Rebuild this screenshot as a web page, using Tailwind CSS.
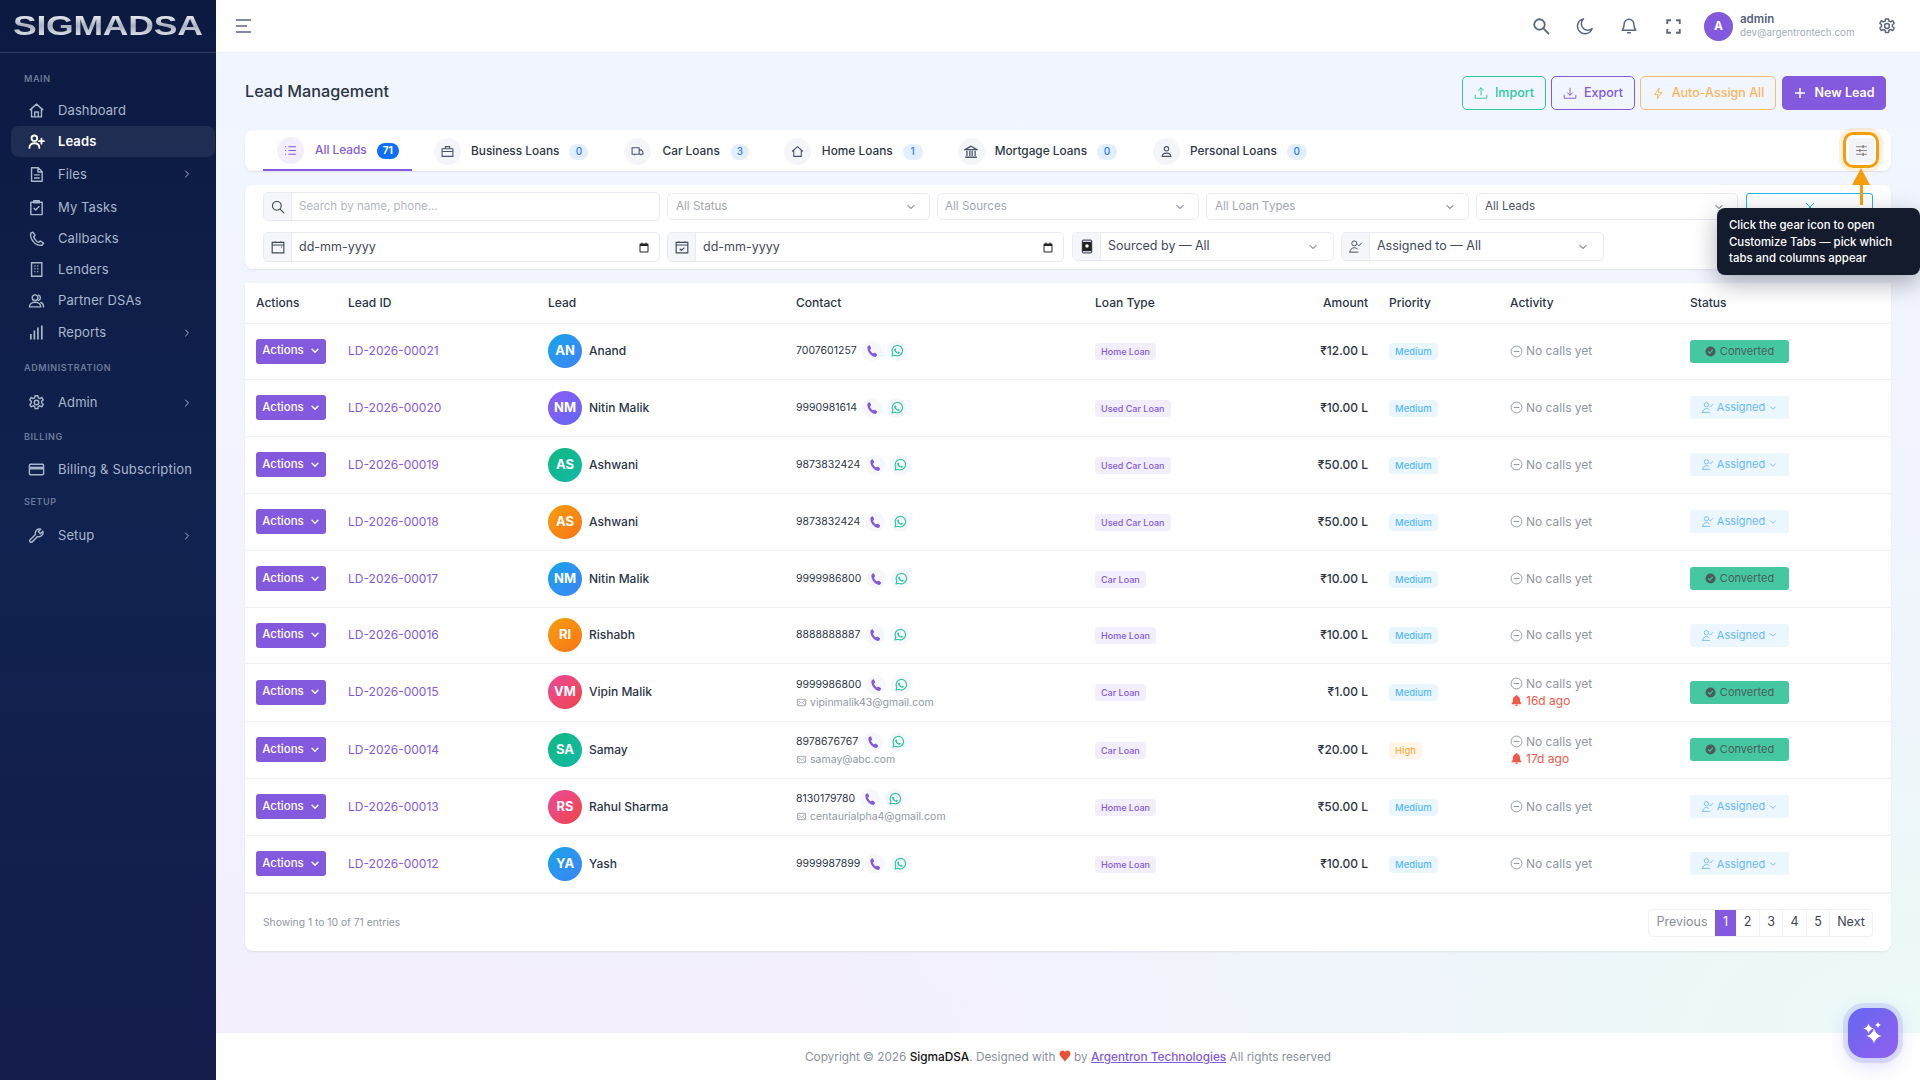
<!DOCTYPE html>
<html lang="en">
<head>
    <meta charset="UTF-8">
    <meta name="viewport" content="width=device-width, initial-scale=1.0">
    <title>Lead Management | SigmaDSA</title>
    <script src="https://cdn.jsdelivr.net/npm/@tailwindcss/browser@4"></script>
</head>
<body class="font-['Inter',sans-serif] bg-white overflow-hidden">
    <!-- Shared icons -->
    <svg class="hidden">
        <symbol id="chev" viewBox="0 0 24 24"><path d="M6 9l6 6 6-6" fill="none" stroke="currentColor" stroke-width="2" stroke-linecap="round" stroke-linejoin="round"/></symbol>
        <symbol id="chev-b" viewBox="0 0 24 24"><path d="M5 8l7 7 7-7" fill="none" stroke="currentColor" stroke-width="3.5" stroke-linecap="round" stroke-linejoin="round"/></symbol>
        <symbol id="chev-r" viewBox="0 0 24 24"><path d="M9 6l6 6-6 6" fill="none" stroke="currentColor" stroke-width="2" stroke-linecap="round" stroke-linejoin="round"/></symbol>
        <symbol id="phone" viewBox="0 0 24 24"><path fill="currentColor" d="M6.6 2.5c.8-.4 1.7-.1 2.1.7l1.6 3.2c.3.7.2 1.4-.3 1.9L8.6 9.7c.6 2.3 2.9 5.2 5 6.5l1.6-1.1c.6-.4 1.3-.4 1.9 0l2.9 2c.7.5.9 1.4.5 2.1l-1 1.7c-.5.9-1.5 1.4-2.5 1.2C9.9 21.3 4.1 13.5 4 6.1c0-1 .5-1.9 1.3-2.6z"/></symbol>
        <symbol id="wa" viewBox="0 0 24 24"><path fill="none" stroke="currentColor" stroke-width="2" stroke-linejoin="round" d="M3.5 20.5l1.3-4.6A9 9 0 1 1 8.3 19.3z"/><path fill="currentColor" d="M9 7.5c.5 0 .8.1 1 .6l.7 1.6c.1.3 0 .6-.2.9l-.6.7c.8 1.4 1.9 2.4 3.3 3.1l.8-.9c.2-.3.5-.3.8-.2l1.6.8c.4.2.5.5.4.9-.2 1.2-1.3 1.9-2.5 1.8-3.5-.4-6.6-3.4-7.2-6.8-.1-1.2.7-2.5 1.9-2.5z"/></symbol>
        <symbol id="mail" viewBox="0 0 24 24"><rect x="3" y="5" width="18" height="14" rx="2" fill="none" stroke="currentColor" stroke-width="1.8"/><path d="M3.5 7l8.5 6 8.5-6M3.5 18l6-6M20.5 18l-6-6" fill="none" stroke="currentColor" stroke-width="1.5"/></symbol>
        <symbol id="minus" viewBox="0 0 24 24"><circle cx="12" cy="12" r="10" fill="none" stroke="currentColor" stroke-width="1.8"/><path d="M7.5 12h9" stroke="currentColor" stroke-width="1.8" stroke-linecap="round"/></symbol>
        <symbol id="bell" viewBox="0 0 24 24"><path fill="currentColor" d="M12 2a2 2 0 0 1 2 1.7 6.5 6.5 0 0 1 4.5 6.3c0 4 .8 5.5 2.5 7.5v1.5H3v-1.5C4.7 15.5 5.5 14 5.5 10A6.5 6.5 0 0 1 10 3.7 2 2 0 0 1 12 2zM9.5 20h5a2.5 2.5 0 0 1-5 0z"/></symbol>
        <symbol id="check" viewBox="0 0 24 24"><circle cx="12" cy="12" r="11" fill="currentColor"/><path d="M7.5 12.5l3 3 6-6.5" fill="none" stroke="#45c8a1" stroke-width="2.2" stroke-linecap="round" stroke-linejoin="round"/></symbol>
        <symbol id="usercheck" viewBox="0 0 24 24"><circle cx="10" cy="7" r="4" fill="none" stroke="currentColor" stroke-width="1.6"/><path d="M3 21c0-4 3-7 7-7 2 0 3.5.6 4.8 1.8M3 21h13M15.5 9l2 2 4-4.5" fill="none" stroke="currentColor" stroke-width="1.6" stroke-linecap="round" stroke-linejoin="round"/></symbol>
        <symbol id="cal" viewBox="0 0 24 24"><path fill="currentColor" d="M7 2h2v2h6V2h2v2h2a2 2 0 0 1 2 2v14a2 2 0 0 1-2 2H5a2 2 0 0 1-2-2V6a2 2 0 0 1 2-2h2zM5 9v11h14V9z"/></symbol>
    </svg>

    <div class="flex h-[1080px] w-[1920px]">
        <!-- Sidebar -->
        <aside class="w-[216px] shrink-0 h-full bg-linear-to-b from-[#0c1a42] via-[#10224f] to-[#141c4c] text-[#aab6cc]">
            <div class="h-[53px] border-b border-white/15 flex items-center pl-[13px] overflow-hidden">
                <span class="font-['Liberation_Sans',sans-serif] font-bold text-[28px] leading-none origin-left scale-x-[1.27] tracking-[-0.2px] bg-linear-to-b from-white via-[#aab2be] to-[#f4f5f8] bg-clip-text text-transparent">SIGMADSA</span>
            </div>
            <nav class="pl-[11px] pr-px text-[13px] leading-none tracking-[0.1px]">
                <p class="mt-[21px] pl-[13px] text-[9px] font-semibold tracking-[0.6px] text-[#6c7a99]">MAIN</p>
                <a class="mt-[12px] h-[31px] flex items-center pl-[17px] pr-[22px] gap-[13px]">
                    <svg class="w-[17px] h-[17px]" viewBox="0 0 24 24" fill="none" stroke="currentColor" stroke-width="2" stroke-linejoin="round"><path d="M2.5 11.5L12 3l9.5 8.5M5 9.5V21h14V9.500M9.5 21v-7h5v7"/></svg>
                    <span>Dashboard</span>
                </a>
                <a class="h-[31px] flex items-center pl-[17px] pr-[22px] gap-[13px] rounded-lg bg-white/8 text-white font-semibold">
                    <svg class="w-[17px] h-[17px]" viewBox="0 0 24 24" fill="none" stroke="currentColor" stroke-width="2.6" stroke-linecap="round"><circle cx="9" cy="7.5" r="4"/><path d="M2 21c0-4 3-6.5 7-6.5s7 2.5 7 6.5M19 8v7M15.5 11.5h7"/></svg>
                    <span>Leads</span>
                </a>
                <a class="mt-px h-[32px] flex items-center pl-[17px] pr-[22px] gap-[13px]">
                    <svg class="w-[17px] h-[17px]" viewBox="0 0 24 24" fill="none" stroke="currentColor" stroke-width="2" stroke-linejoin="round"><path d="M5 2.5h9.5L20 8v13.5H5zM14 3v5.5h6M8.5 12.5h8M8.5 17h8"/></svg>
                    <span>Files</span>
                    <svg class="w-[12px] h-[12px] ml-auto"><use href="#chev-r"/></svg>
                </a>
                <a class="mt-px h-[32px] flex items-center pl-[17px] pr-[22px] gap-[13px]">
                    <svg class="w-[17px] h-[17px]" viewBox="0 0 24 24" fill="none" stroke="currentColor" stroke-width="2" stroke-linejoin="round" stroke-linecap="round"><path d="M4 4.5h16V22H4zM8 2.5h8v3H8zM8.5 13l2.5 2.5 4.5-5"/></svg>
                    <span>My Tasks</span>
                </a>
                <a class="h-[31px] flex items-center pl-[17px] pr-[22px] gap-[13px]">
                    <svg class="w-[17px] h-[17px]" viewBox="0 0 24 24" fill="none" stroke="currentColor" stroke-width="2" stroke-linejoin="round"><path d="M7 3L4 4.5C3 8 4 12 7.5 16.5S16 22 20 21.5l2-3-5-3-2 2c-2-.5-6-4.5-7-8l2-2z"/></svg>
                    <span>Callbacks</span>
                </a>
                <a class="h-[31px] flex items-center pl-[17px] pr-[22px] gap-[13px]">
                    <svg class="w-[17px] h-[17px]" viewBox="0 0 24 24" fill="none" stroke="currentColor" stroke-width="2"><path d="M5 2.5h14.5v19H5zM9 7h1.5M13 7h1.5M9 11h1.5M13 11h1.5M9 15h1.5M13 15h1.5"/></svg>
                    <span>Lenders</span>
                </a>
                <a class="h-[31px] flex items-center pl-[17px] pr-[22px] gap-[13px]">
                    <svg class="w-[17px] h-[17px]" viewBox="0 0 24 24" fill="none" stroke="currentColor" stroke-width="2" stroke-linecap="round"><circle cx="10" cy="8" r="4"/><path d="M2 21c0-4 3.5-6.5 8-6.5s8 2.5 8 6.5zM15 4.3a4 4 0 0 1 0 7.4M18 14.8c2.500.8 4 3 4 6.200"/></svg>
                    <span>Partner DSAs</span>
                </a>
                <a class="mt-px h-[31px] flex items-center pl-[17px] pr-[22px] gap-[13px]">
                    <svg class="w-[17px] h-[17px]" viewBox="0 0 24 24" fill="none" stroke="currentColor" stroke-width="2.4"><path d="M4 22v-8M9 22V9M14 22V5M19.5 22V2"/></svg>
                    <span>Reports</span>
                    <svg class="w-[12px] h-[12px] ml-auto"><use href="#chev-r"/></svg>
                </a>
                <p class="mt-[15px] pl-[13px] text-[9px] font-semibold tracking-[0.6px] text-[#6c7a99]">ADMINISTRATION</p>
                <a class="mt-[15px] h-[31px] flex items-center pl-[17px] pr-[22px] gap-[13px]">
                    <svg class="w-[17px] h-[17px]" viewBox="0 0 24 24" fill="none" stroke="currentColor" stroke-width="2" stroke-linejoin="round"><path d="M10 2.5h4l.6 3 2.3 1 2.6-1.6 2 3.4-2.3 2 .1 2.4 2.2 2-2 3.4-2.6-1.5-2.3 1-.6 3h-4l-.6-3-2.3-1-2.6 1.5-2-3.4 2.2-2 0-2.4-2.2-2 2-3.4 2.6 1.6 2.3-1z"/><circle cx="12" cy="12" r="3.2"/></svg>
                    <span>Admin</span>
                    <svg class="w-[12px] h-[12px] ml-auto"><use href="#chev-r"/></svg>
                </a>
                <p class="mt-[14px] pl-[13px] text-[9px] font-semibold tracking-[0.6px] text-[#6c7a99]">BILLING</p>
                <a class="mt-[13px] h-[31px] flex items-center pl-[17px] pr-[12px] gap-[13px]">
                    <svg class="w-[17px] h-[17px]" viewBox="0 0 24 24" fill="none" stroke="currentColor" stroke-width="2"><rect x="2" y="4.5" width="20" height="15" rx="1.5"/><path d="M2 10h20" stroke-width="4"/></svg>
                    <span class="whitespace-nowrap tracking-[0.2px]">Billing &amp; Subscription</span>
                </a>
                <p class="mt-[12px] pl-[13px] text-[9px] font-semibold tracking-[0.6px] text-[#6c7a99]">SETUP</p>
                <a class="mt-[14px] h-[31px] flex items-center pl-[17px] pr-[22px] gap-[13px]">
                    <svg class="w-[17px] h-[17px]" viewBox="0 0 24 24" fill="none" stroke="currentColor" stroke-width="2" stroke-linejoin="round"><path d="M21 6l-3.5 3.5-3-3L18 3a6 6 0 0 0-7.5 7.5L3 18c-1 1-1 2 0 3s2 1 3 0l7.5-7.5A6 6 0 0 0 21 6z"/></svg>
                    <span>Setup</span>
                    <svg class="w-[12px] h-[12px] ml-auto"><use href="#chev-r"/></svg>
                </a>
            </nav>
        </aside>

        <div class="flex-1 flex flex-col min-w-0">
            <!-- Header -->
            <header class="h-[53px] shrink-0 bg-white border-b border-[#eef0f5] flex items-center pl-[20px] pr-[24px] text-[#5a6680]">
                <svg class="w-[16px] h-[14px]" viewBox="0 0 16 14" fill="none" stroke="currentColor" stroke-width="1.5"><path d="M0 1h15M0 7h11M0 13h15"/></svg>
                <div class="ml-auto flex items-center">
                    <svg class="w-[18px] h-[18px]" viewBox="0 0 24 24" fill="none" stroke="currentColor" stroke-width="2.4" stroke-linecap="round"><circle cx="10" cy="10" r="7"/><path d="M15.5 15.5L22 22"/></svg>
                    <svg class="w-[18px] h-[18px] ml-[26px]" viewBox="0 0 24 24" fill="none" stroke="currentColor" stroke-width="2" stroke-linejoin="round"><path d="M10 2.5a10 10 0 1 0 11.5 13 8.5 8.5 0 0 1-11.5-13z"/></svg>
                    <svg class="w-[18px] h-[18px] ml-[26px]" viewBox="0 0 24 24" fill="none" stroke="currentColor" stroke-width="2" stroke-linejoin="round"><path d="M12 3a6.5 6.5 0 0 0-6.5 6.5c0 4.5-1 6-2.500 8h18c-1.500-2-2.500-3.500-2.500-8A6.500 6.500 0 0 0 12 3zM9.500 21h5"/></svg>
                    <svg class="w-[15px] h-[15px] ml-[28px]" viewBox="0 0 24 24" fill="none" stroke="currentColor" stroke-width="3"><path d="M2 8V2h6M16 2h6v6M22 16v6h-6M8 22H2v-6"/></svg>
                    <span class="ml-[23px] w-[29px] h-[29px] rounded-full bg-[#8359dd] text-white text-[12px] font-bold flex items-center justify-center">A</span>
                    <div class="ml-[7px] w-[126px]">
                        <p class="text-[11.5px] leading-[14px] font-semibold text-[#55617b]">admin</p>
                        <p class="text-[9.8px] leading-[14px] text-[#a4acba]">dev@argentrontech.com</p>
                    </div>
                    <svg class="w-[18px] h-[18px] ml-[12px]" viewBox="0 0 24 24" fill="none" stroke="currentColor" stroke-width="2" stroke-linejoin="round"><path d="M10 2.5h4l.6 3 2.3 1 2.6-1.6 2 3.4-2.3 2 .1 2.4 2.2 2-2 3.4-2.6-1.5-2.3 1-.6 3h-4l-.6-3-2.3-1-2.6 1.5-2-3.4 2.2-2 0-2.4-2.2-2 2-3.4 2.6 1.6 2.3-1z"/><circle cx="12" cy="12" r="3.2"/></svg>
                </div>
            </header>

            <!-- Main Content -->
            <main class="relative flex-1 bg-[radial-gradient(ellipse_at_bottom_right,#ebfaf7_0%,transparent_45%),linear-gradient(180deg,#f1f6fe_0%,#f3f3fe_50%,#f3effd_100%)] pl-[29px] pr-[29px]">
                <div class="h-[77px] flex items-start">
                    <h1 class="mt-[27px] text-[16.2px] leading-[22px] font-medium text-[#2a3547]">Lead Management</h1>
                    <div class="ml-auto mt-[23px] mr-[5px] flex text-[12.5px] font-medium">
                        <button class="h-[34px] w-[84px] rounded-[5px] border border-[#2fc6a0] text-[#2fc6a0] flex items-center justify-center gap-[7px]">
                            <svg class="w-[14px] h-[14px]" viewBox="0 0 24 24" fill="none" stroke="currentColor" stroke-width="1.6"><path d="M12 16V3M7 8l5-5 5 5M2 15v6h20v-6"/></svg>Import
                        </button>
                        <button class="ml-[5px] h-[34px] w-[84px] rounded-[5px] border border-[#8359dd] text-[#8359dd] flex items-center justify-center gap-[7px]">
                            <svg class="w-[14px] h-[14px]" viewBox="0 0 24 24" fill="none" stroke="currentColor" stroke-width="1.6"><path d="M12 3v13M7 11l5 5 5-5M2 15v6h20v-6"/></svg>Export
                        </button>
                        <button class="ml-[5px] h-[34px] w-[136px] rounded-[5px] border border-[#f8bd6e] text-[#f8b65f] flex items-center justify-center gap-[7px]">
                            <svg class="w-[13px] h-[15px]" viewBox="0 0 24 24" fill="none" stroke="currentColor" stroke-width="1.8" stroke-linejoin="round"><path d="M13 2L5 14h6l-1 8 8-12h-6z"/></svg>Auto-Assign All
                        </button>
                        <button class="ml-[6px] h-[34px] w-[104px] rounded-[5px] bg-[#8359dd] text-white font-semibold flex items-center justify-center gap-[9px]">
                            <svg class="w-[12px] h-[12px]" viewBox="0 0 12 12" fill="none" stroke="currentColor" stroke-width="1.5"><path d="M6 1v10M1 6h10"/></svg>New Lead
                        </button>
                    </div>
                </div>

                <!-- Loan tabs -->
                <div class="h-[41px] bg-white rounded-lg shadow-[0_1px_2px_rgba(60,70,110,.1)] relative flex items-center pl-[18px] pt-[2px] text-[11.85px] font-medium text-[#2d3748]">
                    <div class="relative h-full w-[149px] flex items-center pl-[14px] text-[#8359dd] border-b-[2px] border-[#8359dd]">
                        <span class="w-[27px] h-[27px] rounded-full bg-[#f3eefc] flex items-center justify-center">
                            <svg class="w-[13px] h-[13px]" viewBox="0 0 24 24" fill="none" stroke="currentColor" stroke-width="2"><path d="M8 5h14M8 12h14M8 19h14M2 5h2M2 12h2M2 19h2"/></svg>
                        </span>
                        <span class="ml-[11px]">All Leads</span>
                        <span class="ml-[10px] w-[22px] h-[16px] rounded-full bg-[#0d6efd] text-white text-[10px] font-bold flex items-center justify-center">71</span>
                    </div>
                    <div class="ml-[22px] flex items-center">
                        <span class="w-[27px] h-[27px] rounded-full bg-[#f3f5f8] flex items-center justify-center">
                            <svg class="w-[13px] h-[13px]" viewBox="0 0 24 24" fill="none" stroke="#4a5568" stroke-width="2"><path d="M2 7h20v14H2zM8 7V3h8v4M2 12h20"/></svg>
                        </span>
                        <span class="ml-[10px]">Business Loans</span>
                        <span class="ml-[10px] w-[19px] h-[16px] rounded-full bg-[#e3eefe] text-[#2b7fff] text-[10px] flex items-center justify-center">0</span>
                    </div>
                    <div class="ml-[36px] flex items-center">
                        <span class="w-[27px] h-[27px] rounded-full bg-[#f3f5f8] flex items-center justify-center">
                            <svg class="w-[13px] h-[13px]" viewBox="0 0 24 24" fill="none" stroke="#4a5568" stroke-width="2"><path d="M2 5h13v12H2zM15 9h4l3 4v4h-7M6 17v2M18 17v2"/></svg>
                        </span>
                        <span class="ml-[11px]">Car Loans</span>
                        <span class="ml-[11px] w-[18px] h-[16px] rounded-full bg-[#e3eefe] text-[#2b7fff] text-[10px] flex items-center justify-center">3</span>
                    </div>
                    <div class="ml-[35px] flex items-center">
                        <span class="w-[27px] h-[27px] rounded-full bg-[#f3f5f8] flex items-center justify-center">
                            <svg class="w-[13px] h-[13px]" viewBox="0 0 24 24" fill="none" stroke="#4a5568" stroke-width="2" stroke-linejoin="round"><path d="M2 12L12 3l10 9M5 10v11h14V10"/></svg>
                        </span>
                        <span class="ml-[11px]">Home Loans</span>
                        <span class="ml-[10px] w-[20px] h-[16px] rounded-full bg-[#e3eefe] text-[#2b7fff] text-[10px] flex items-center justify-center">1</span>
                    </div>
                    <div class="ml-[35px] flex items-center">
                        <span class="w-[27px] h-[27px] rounded-full bg-[#f3f5f8] flex items-center justify-center">
                            <svg class="w-[14px] h-[14px]" viewBox="0 0 24 24" fill="none" stroke="#4a5568" stroke-width="2.2"><path d="M12 2L2 8h20zM5 10v9M10 10v9M14 10v9M19 10v9M2 21h20"/></svg>
                        </span>
                        <span class="ml-[10px]">Mortgage Loans</span>
                        <span class="ml-[10px] w-[20px] h-[16px] rounded-full bg-[#e3eefe] text-[#2b7fff] text-[10px] flex items-center justify-center">0</span>
                    </div>
                    <div class="ml-[36px] flex items-center">
                        <span class="w-[27px] h-[27px] rounded-full bg-[#f3f5f8] flex items-center justify-center">
                            <svg class="w-[13px] h-[13px]" viewBox="0 0 24 24" fill="none" stroke="#4a5568" stroke-width="2"><circle cx="12" cy="7" r="4"/><path d="M4 21c0-4 3.5-6 8-6s8 2 8 6z"/></svg>
                        </span>
                        <span class="ml-[10px]">Personal Loans</span>
                        <span class="ml-[10px] w-[20px] h-[16px] rounded-full bg-[#e3eefe] text-[#2b7fff] text-[10px] flex items-center justify-center">0</span>
                    </div>
                </div>

                <!-- Filters -->
                <div class="mt-[14px] h-[84px] bg-white rounded-lg shadow-[0_1px_2px_rgba(60,70,110,.1)] pl-[18px] text-[11.6px] text-[#a1a7b3]">
                    <div class="pt-[7px] flex gap-[7px] items-center">
                        <div class="w-[397px] h-[29px] flex rounded-[5px] border border-[#e8ebf2] overflow-hidden">
                            <span class="w-[28px] bg-[#f4f6f9] border-r border-[#e8ebf2] flex items-center justify-center text-[#3f4a5a]">
                                <svg class="w-[14px] h-[14px]" viewBox="0 0 24 24" fill="none" stroke="currentColor" stroke-width="2" stroke-linecap="round"><circle cx="10" cy="10" r="7.5"/><path d="M16 16l6 6"/></svg>
                            </span>
                            <span class="pl-[7px] pt-px flex items-center text-[11.5px] text-[#b3b8c2]">Search by name, phone...</span>
                        </div>
                        <div class="w-[263px] h-[27px] rounded-[5px] border border-[#e8ebf2] flex items-center pl-[8px] pr-[12px]">All Status<svg class="ml-auto w-[12px] h-[12px] text-[#4a5568]"><use href="#chev"/></svg></div>
                        <div class="w-[262px] h-[27px] rounded-[5px] border border-[#e8ebf2] flex items-center pl-[7px] pr-[12px]">All Sources<svg class="ml-auto w-[12px] h-[12px] text-[#4a5568]"><use href="#chev"/></svg></div>
                        <div class="w-[263px] h-[27px] rounded-[5px] border border-[#e8ebf2] flex items-center pl-[8px] pr-[12px]">All Loan Types<svg class="ml-auto w-[12px] h-[12px] text-[#4a5568]"><use href="#chev"/></svg></div>
                        <div class="w-[262px] h-[27px] rounded-[5px] border border-[#e8ebf2] flex items-center pl-[8px] pr-[12px] text-[#4a5566]">All Leads<svg class="ml-auto w-[12px] h-[12px]"><use href="#chev"/></svg></div>
                        <button class="ml-px w-[127px] h-[27px] rounded-[3px] border border-[#25b7e4] flex items-center justify-center text-[#25b7e4]">
                            <svg class="w-[10px] h-[10px]" viewBox="0 0 10 10" fill="none" stroke="currentColor" stroke-width="1"><path d="M1 1l8 8M9 1l-8 8"/></svg>
                        </button>
                    </div>
                    <div class="mt-[11px] flex gap-[7px] text-[12.5px] text-[#3f4a5a]">
                        <div class="w-[397px] h-[30px] flex rounded-[5px] border border-[#e8ebf2] overflow-hidden">
                            <span class="w-[28px] bg-[#f4f6f9] border-r border-[#e8ebf2] flex items-center justify-center">
                                <svg class="w-[14px] h-[14px]" viewBox="0 0 24 24" fill="none" stroke="currentColor" stroke-width="2"><path d="M2 4h20v18H2zM2 8.5h20M7 2v3M17 2v3M17 12h2"/></svg>
                            </span>
                            <span class="pl-[7px] flex-1 flex items-center">dd-mm-yyyy</span>
                            <svg class="w-[12px] h-[13px] self-center mr-[9px] text-[#222]"><use href="#cal"/></svg>
                        </div>
                        <div class="w-[397px] h-[30px] flex rounded-[5px] border border-[#e8ebf2] overflow-hidden">
                            <span class="w-[28px] bg-[#f4f6f9] border-r border-[#e8ebf2] flex items-center justify-center">
                                <svg class="w-[14px] h-[14px]" viewBox="0 0 24 24" fill="none" stroke="currentColor" stroke-width="2"><path d="M2 4h20v18H2zM2 8.5h20M7 2v3M17 2v3M8 15l3 3 5-5"/></svg>
                            </span>
                            <span class="pl-[7px] flex-1 flex items-center">dd-mm-yyyy</span>
                            <svg class="w-[12px] h-[13px] self-center mr-[9px] text-[#222]"><use href="#cal"/></svg>
                        </div>
                        <div class="ml-px w-[262px] h-[29px] flex rounded-[5px] border border-[#e8ebf2] overflow-hidden">
                            <span class="w-[28px] bg-[#f4f6f9] border-r border-[#e8ebf2] flex items-center justify-center">
                                <svg class="w-[14px] h-[15px]" viewBox="0 0 24 24"><rect x="4" y="1" width="16" height="22" rx="2" fill="none" stroke="#4a5568" stroke-width="2"/><rect x="4" y="4" width="16" height="16" fill="#222"/><circle cx="12" cy="11" r="3" fill="#fff"/></svg>
                            </span>
                            <span class="pl-[7px] flex-1 flex items-center">Sourced by — All</span>
                            <svg class="w-[12px] h-[12px] self-center mr-[14px] text-[#4a5568]"><use href="#chev"/></svg>
                        </div>
                        <div class="w-[263px] h-[29px] flex rounded-[5px] border border-[#e8ebf2] overflow-hidden">
                            <span class="w-[28px] bg-[#f4f6f9] border-r border-[#e8ebf2] flex items-center justify-center text-[#4a5568]">
                                <svg class="w-[15px] h-[15px]"><use href="#usercheck"/></svg>
                            </span>
                            <span class="pl-[7px] flex-1 flex items-center">Assigned to — All</span>
                            <svg class="w-[12px] h-[12px] self-center mr-[14px]"><use href="#chev"/></svg>
                        </div>
                    </div>
                </div>

                <!-- Leads table -->
                <div class="mt-[14px] bg-white rounded-b-lg shadow-[0_1px_2px_rgba(60,70,110,.1)]">
                    <table class="w-full table-fixed border-collapse">
                        <colgroup>
                            <col class="w-[92px]"><col class="w-[200px]"><col class="w-[248px]"><col class="w-[299px]"><col class="w-[200px]"><col class="w-[94px]"><col class="w-[121px]"><col class="w-[180px]"><col>
                        </colgroup>
                        <thead>
                            <tr class="h-[40px] border-b border-[#eff1f4] text-[12px] text-[#2a3547] text-left">
                                <th class="pl-[11px] font-medium">Actions</th>
                                <th class="pl-[11px] font-medium">Lead ID</th>
                                <th class="pl-[11px] font-medium">Lead</th>
                                <th class="pl-[11px] font-medium">Contact</th>
                                <th class="pl-[11px] font-medium">Loan Type</th>
                                <th class="pr-[10px] text-right font-medium">Amount</th>
                                <th class="pl-[11px] font-medium">Priority</th>
                                <th class="pl-[11px] font-medium">Activity</th>
                                <th class="pl-[11px] font-medium">Status</th>
                            </tr>
                        </thead>
                        <tbody class="text-[12px] text-[#2a3547]">
                            <tr class="h-[56px] border-b border-[#eff1f4]">
                                <td class="pl-[11px]"><button class="w-[70px] h-[25px] rounded-[3px] bg-[#8359dd] text-white font-medium text-[11.5px] flex items-center justify-center gap-[6px]">Actions<svg class="w-[10px] h-[10px]"><use href="#chev-b"/></svg></button></td>
                                <td class="pl-[11px] text-[#8359dd]">LD-2026-00021</td>
                                <td class="pl-[11px]"><div class="flex items-center gap-[7px]"><span class="w-[34px] h-[34px] rounded-full bg-linear-to-br from-[#0ea5e9] to-[#3b82f6] text-white text-[13px] font-bold flex items-center justify-center">AN</span><span class="font-medium">Anand</span></div></td>
                                <td class="pl-[11px]"><div class="flex items-center text-[10.5px]">7007601257<span class="ml-[5px] w-[20px] h-[20px] rounded-full bg-[#f6f7fb] flex items-center justify-center text-[#8359dd]"><svg class="w-[14px] h-[14px]"><use href="#phone"/></svg></span><span class="ml-[5px] w-[20px] h-[20px] rounded-full bg-[#f6f7fb] flex items-center justify-center text-[#2fc6a0]"><svg class="w-[14px] h-[14px]"><use href="#wa"/></svg></span></div></td>
                                <td class="pl-[11px]"><span class="inline-block px-[6px] leading-[17px] rounded-[4px] bg-[#f3eefc] text-[#8359dd] text-[9px] font-medium">Home Loan</span></td>
                                <td class="pr-[10px] text-right font-medium">₹12.00 L</td>
                                <td class="pl-[11px]"><span class="inline-block px-[6px] leading-[17px] rounded-[4px] bg-[#e9f6fe] text-[#57b9fb] text-[9.5px] font-medium">Medium</span></td>
                                <td class="pl-[11px] text-[#8f97a3]"><div class="flex items-center gap-[3px]"><svg class="w-[13px] h-[13px]"><use href="#minus"/></svg>No calls yet</div></td>
                                <td class="pl-[11px]"><span class="w-[99px] h-[23px] rounded-[3px] bg-[#45c8a1] text-[#4c5c5a] text-[11px] flex items-center justify-center gap-[4px]"><svg class="w-[11px] h-[11px]"><use href="#check"/></svg>Converted</span></td>
                            </tr>
                            <tr class="h-[57px] border-b border-[#eff1f4]">
                                <td class="pl-[11px]"><button class="w-[70px] h-[25px] rounded-[3px] bg-[#8359dd] text-white font-medium text-[11.5px] flex items-center justify-center gap-[6px]">Actions<svg class="w-[10px] h-[10px]"><use href="#chev-b"/></svg></button></td>
                                <td class="pl-[11px] text-[#8359dd]">LD-2026-00020</td>
                                <td class="pl-[11px]"><div class="flex items-center gap-[7px]"><span class="w-[34px] h-[34px] rounded-full bg-linear-to-br from-[#8b5cf6] to-[#6366f1] text-white text-[13px] font-bold flex items-center justify-center">NM</span><span class="font-medium">Nitin Malik</span></div></td>
                                <td class="pl-[11px]"><div class="flex items-center text-[10.5px]">9990981614<span class="ml-[5px] w-[20px] h-[20px] rounded-full bg-[#f6f7fb] flex items-center justify-center text-[#8359dd]"><svg class="w-[14px] h-[14px]"><use href="#phone"/></svg></span><span class="ml-[5px] w-[20px] h-[20px] rounded-full bg-[#f6f7fb] flex items-center justify-center text-[#2fc6a0]"><svg class="w-[14px] h-[14px]"><use href="#wa"/></svg></span></div></td>
                                <td class="pl-[11px]"><span class="inline-block px-[6px] leading-[17px] rounded-[4px] bg-[#f3eefc] text-[#8359dd] text-[9px] font-medium">Used Car Loan</span></td>
                                <td class="pr-[10px] text-right font-medium">₹10.00 L</td>
                                <td class="pl-[11px]"><span class="inline-block px-[6px] leading-[17px] rounded-[4px] bg-[#e9f6fe] text-[#57b9fb] text-[9.5px] font-medium">Medium</span></td>
                                <td class="pl-[11px] text-[#8f97a3]"><div class="flex items-center gap-[3px]"><svg class="w-[13px] h-[13px]"><use href="#minus"/></svg>No calls yet</div></td>
                                <td class="pl-[11px]"><span class="w-[99px] h-[23px] rounded-[3px] bg-[#ebf6fe] text-[#6ab9fb] text-[11px] flex items-center justify-center gap-[3px]"><svg class="w-[13px] h-[13px]"><use href="#usercheck"/></svg>Assigned<svg class="w-[10px] h-[10px]"><use href="#chev"/></svg></span></td>
                            </tr>
                            <tr class="h-[57px] border-b border-[#eff1f4]">
                                <td class="pl-[11px]"><button class="w-[70px] h-[25px] rounded-[3px] bg-[#8359dd] text-white font-medium text-[11.5px] flex items-center justify-center gap-[6px]">Actions<svg class="w-[10px] h-[10px]"><use href="#chev-b"/></svg></button></td>
                                <td class="pl-[11px] text-[#8359dd]">LD-2026-00019</td>
                                <td class="pl-[11px]"><div class="flex items-center gap-[7px]"><span class="w-[34px] h-[34px] rounded-full bg-linear-to-br from-[#10b981] to-[#14b8a6] text-white text-[13px] font-bold flex items-center justify-center">AS</span><span class="font-medium">Ashwani</span></div></td>
                                <td class="pl-[11px]"><div class="flex items-center text-[10.5px]">9873832424<span class="ml-[5px] w-[20px] h-[20px] rounded-full bg-[#f6f7fb] flex items-center justify-center text-[#8359dd]"><svg class="w-[14px] h-[14px]"><use href="#phone"/></svg></span><span class="ml-[5px] w-[20px] h-[20px] rounded-full bg-[#f6f7fb] flex items-center justify-center text-[#2fc6a0]"><svg class="w-[14px] h-[14px]"><use href="#wa"/></svg></span></div></td>
                                <td class="pl-[11px]"><span class="inline-block px-[6px] leading-[17px] rounded-[4px] bg-[#f3eefc] text-[#8359dd] text-[9px] font-medium">Used Car Loan</span></td>
                                <td class="pr-[10px] text-right font-medium">₹50.00 L</td>
                                <td class="pl-[11px]"><span class="inline-block px-[6px] leading-[17px] rounded-[4px] bg-[#e9f6fe] text-[#57b9fb] text-[9.5px] font-medium">Medium</span></td>
                                <td class="pl-[11px] text-[#8f97a3]"><div class="flex items-center gap-[3px]"><svg class="w-[13px] h-[13px]"><use href="#minus"/></svg>No calls yet</div></td>
                                <td class="pl-[11px]"><span class="w-[99px] h-[23px] rounded-[3px] bg-[#ebf6fe] text-[#6ab9fb] text-[11px] flex items-center justify-center gap-[3px]"><svg class="w-[13px] h-[13px]"><use href="#usercheck"/></svg>Assigned<svg class="w-[10px] h-[10px]"><use href="#chev"/></svg></span></td>
                            </tr>
                            <tr class="h-[57px] border-b border-[#eff1f4]">
                                <td class="pl-[11px]"><button class="w-[70px] h-[25px] rounded-[3px] bg-[#8359dd] text-white font-medium text-[11.5px] flex items-center justify-center gap-[6px]">Actions<svg class="w-[10px] h-[10px]"><use href="#chev-b"/></svg></button></td>
                                <td class="pl-[11px] text-[#8359dd]">LD-2026-00018</td>
                                <td class="pl-[11px]"><div class="flex items-center gap-[7px]"><span class="w-[34px] h-[34px] rounded-full bg-linear-to-br from-[#f59e0b] to-[#f97316] text-white text-[13px] font-bold flex items-center justify-center">AS</span><span class="font-medium">Ashwani</span></div></td>
                                <td class="pl-[11px]"><div class="flex items-center text-[10.5px]">9873832424<span class="ml-[5px] w-[20px] h-[20px] rounded-full bg-[#f6f7fb] flex items-center justify-center text-[#8359dd]"><svg class="w-[14px] h-[14px]"><use href="#phone"/></svg></span><span class="ml-[5px] w-[20px] h-[20px] rounded-full bg-[#f6f7fb] flex items-center justify-center text-[#2fc6a0]"><svg class="w-[14px] h-[14px]"><use href="#wa"/></svg></span></div></td>
                                <td class="pl-[11px]"><span class="inline-block px-[6px] leading-[17px] rounded-[4px] bg-[#f3eefc] text-[#8359dd] text-[9px] font-medium">Used Car Loan</span></td>
                                <td class="pr-[10px] text-right font-medium">₹50.00 L</td>
                                <td class="pl-[11px]"><span class="inline-block px-[6px] leading-[17px] rounded-[4px] bg-[#e9f6fe] text-[#57b9fb] text-[9.5px] font-medium">Medium</span></td>
                                <td class="pl-[11px] text-[#8f97a3]"><div class="flex items-center gap-[3px]"><svg class="w-[13px] h-[13px]"><use href="#minus"/></svg>No calls yet</div></td>
                                <td class="pl-[11px]"><span class="w-[99px] h-[23px] rounded-[3px] bg-[#ebf6fe] text-[#6ab9fb] text-[11px] flex items-center justify-center gap-[3px]"><svg class="w-[13px] h-[13px]"><use href="#usercheck"/></svg>Assigned<svg class="w-[10px] h-[10px]"><use href="#chev"/></svg></span></td>
                            </tr>
                            <tr class="h-[57px] border-b border-[#eff1f4]">
                                <td class="pl-[11px]"><button class="w-[70px] h-[25px] rounded-[3px] bg-[#8359dd] text-white font-medium text-[11.5px] flex items-center justify-center gap-[6px]">Actions<svg class="w-[10px] h-[10px]"><use href="#chev-b"/></svg></button></td>
                                <td class="pl-[11px] text-[#8359dd]">LD-2026-00017</td>
                                <td class="pl-[11px]"><div class="flex items-center gap-[7px]"><span class="w-[34px] h-[34px] rounded-full bg-linear-to-br from-[#0ea5e9] to-[#3b82f6] text-white text-[13px] font-bold flex items-center justify-center">NM</span><span class="font-medium">Nitin Malik</span></div></td>
                                <td class="pl-[11px]"><div class="flex items-center text-[10.5px]">9999986800<span class="ml-[5px] w-[20px] h-[20px] rounded-full bg-[#f6f7fb] flex items-center justify-center text-[#8359dd]"><svg class="w-[14px] h-[14px]"><use href="#phone"/></svg></span><span class="ml-[5px] w-[20px] h-[20px] rounded-full bg-[#f6f7fb] flex items-center justify-center text-[#2fc6a0]"><svg class="w-[14px] h-[14px]"><use href="#wa"/></svg></span></div></td>
                                <td class="pl-[11px]"><span class="inline-block px-[6px] leading-[17px] rounded-[4px] bg-[#f3eefc] text-[#8359dd] text-[9px] font-medium">Car Loan</span></td>
                                <td class="pr-[10px] text-right font-medium">₹10.00 L</td>
                                <td class="pl-[11px]"><span class="inline-block px-[6px] leading-[17px] rounded-[4px] bg-[#e9f6fe] text-[#57b9fb] text-[9.5px] font-medium">Medium</span></td>
                                <td class="pl-[11px] text-[#8f97a3]"><div class="flex items-center gap-[3px]"><svg class="w-[13px] h-[13px]"><use href="#minus"/></svg>No calls yet</div></td>
                                <td class="pl-[11px]"><span class="w-[99px] h-[23px] rounded-[3px] bg-[#45c8a1] text-[#4c5c5a] text-[11px] flex items-center justify-center gap-[4px]"><svg class="w-[11px] h-[11px]"><use href="#check"/></svg>Converted</span></td>
                            </tr>
                            <tr class="h-[56px] border-b border-[#eff1f4]">
                                <td class="pl-[11px]"><button class="w-[70px] h-[25px] rounded-[3px] bg-[#8359dd] text-white font-medium text-[11.5px] flex items-center justify-center gap-[6px]">Actions<svg class="w-[10px] h-[10px]"><use href="#chev-b"/></svg></button></td>
                                <td class="pl-[11px] text-[#8359dd]">LD-2026-00016</td>
                                <td class="pl-[11px]"><div class="flex items-center gap-[7px]"><span class="w-[34px] h-[34px] rounded-full bg-linear-to-br from-[#f59e0b] to-[#f97316] text-white text-[13px] font-bold flex items-center justify-center">RI</span><span class="font-medium">Rishabh</span></div></td>
                                <td class="pl-[11px]"><div class="flex items-center text-[10.5px]">8888888887<span class="ml-[5px] w-[20px] h-[20px] rounded-full bg-[#f6f7fb] flex items-center justify-center text-[#8359dd]"><svg class="w-[14px] h-[14px]"><use href="#phone"/></svg></span><span class="ml-[5px] w-[20px] h-[20px] rounded-full bg-[#f6f7fb] flex items-center justify-center text-[#2fc6a0]"><svg class="w-[14px] h-[14px]"><use href="#wa"/></svg></span></div></td>
                                <td class="pl-[11px]"><span class="inline-block px-[6px] leading-[17px] rounded-[4px] bg-[#f3eefc] text-[#8359dd] text-[9px] font-medium">Home Loan</span></td>
                                <td class="pr-[10px] text-right font-medium">₹10.00 L</td>
                                <td class="pl-[11px]"><span class="inline-block px-[6px] leading-[17px] rounded-[4px] bg-[#e9f6fe] text-[#57b9fb] text-[9.5px] font-medium">Medium</span></td>
                                <td class="pl-[11px] text-[#8f97a3]"><div class="flex items-center gap-[3px]"><svg class="w-[13px] h-[13px]"><use href="#minus"/></svg>No calls yet</div></td>
                                <td class="pl-[11px]"><span class="w-[99px] h-[23px] rounded-[3px] bg-[#ebf6fe] text-[#6ab9fb] text-[11px] flex items-center justify-center gap-[3px]"><svg class="w-[13px] h-[13px]"><use href="#usercheck"/></svg>Assigned<svg class="w-[10px] h-[10px]"><use href="#chev"/></svg></span></td>
                            </tr>
                            <tr class="h-[58px] border-b border-[#eff1f4]">
                                <td class="pl-[11px]"><button class="w-[70px] h-[25px] rounded-[3px] bg-[#8359dd] text-white font-medium text-[11.5px] flex items-center justify-center gap-[6px]">Actions<svg class="w-[10px] h-[10px]"><use href="#chev-b"/></svg></button></td>
                                <td class="pl-[11px] text-[#8359dd]">LD-2026-00015</td>
                                <td class="pl-[11px]"><div class="flex items-center gap-[7px]"><span class="w-[34px] h-[34px] rounded-full bg-linear-to-br from-[#ec4899] to-[#ef4444] text-white text-[13px] font-bold flex items-center justify-center">VM</span><span class="font-medium">Vipin Malik</span></div></td>
                                <td class="pl-[11px]"><div class="flex items-center text-[10.5px]">9999986800<span class="ml-[5px] w-[20px] h-[20px] rounded-full bg-[#f6f7fb] flex items-center justify-center text-[#8359dd]"><svg class="w-[14px] h-[14px]"><use href="#phone"/></svg></span><span class="ml-[5px] w-[20px] h-[20px] rounded-full bg-[#f6f7fb] flex items-center justify-center text-[#2fc6a0]"><svg class="w-[14px] h-[14px]"><use href="#wa"/></svg></span></div><div class="flex items-center gap-[3px] text-[10.5px] leading-[15px] text-[#9098a5]"><svg class="w-[11px] h-[11px]"><use href="#mail"/></svg>vipinmalik43@gmail.com</div></td>
                                <td class="pl-[11px]"><span class="inline-block px-[6px] leading-[17px] rounded-[4px] bg-[#f3eefc] text-[#8359dd] text-[9px] font-medium">Car Loan</span></td>
                                <td class="pr-[10px] text-right font-medium">₹1.00 L</td>
                                <td class="pl-[11px]"><span class="inline-block px-[6px] leading-[17px] rounded-[4px] bg-[#e9f6fe] text-[#57b9fb] text-[9.5px] font-medium">Medium</span></td>
                                <td class="pl-[11px] text-[#8f97a3]"><div class="flex items-center gap-[3px] leading-[17px]"><svg class="w-[13px] h-[13px]"><use href="#minus"/></svg>No calls yet</div><div class="flex items-center gap-[3px] leading-[17px] text-[#f0584a]"><svg class="w-[13px] h-[13px]"><use href="#bell"/></svg>16d ago</div></td>
                                <td class="pl-[11px]"><span class="w-[99px] h-[23px] rounded-[3px] bg-[#45c8a1] text-[#4c5c5a] text-[11px] flex items-center justify-center gap-[4px]"><svg class="w-[11px] h-[11px]"><use href="#check"/></svg>Converted</span></td>
                            </tr>
                            <tr class="h-[57px] border-b border-[#eff1f4]">
                                <td class="pl-[11px]"><button class="w-[70px] h-[25px] rounded-[3px] bg-[#8359dd] text-white font-medium text-[11.5px] flex items-center justify-center gap-[6px]">Actions<svg class="w-[10px] h-[10px]"><use href="#chev-b"/></svg></button></td>
                                <td class="pl-[11px] text-[#8359dd]">LD-2026-00014</td>
                                <td class="pl-[11px]"><div class="flex items-center gap-[7px]"><span class="w-[34px] h-[34px] rounded-full bg-linear-to-br from-[#10b981] to-[#14b8a6] text-white text-[13px] font-bold flex items-center justify-center">SA</span><span class="font-medium">Samay</span></div></td>
                                <td class="pl-[11px]"><div class="flex items-center text-[10.5px]">8978676767<span class="ml-[5px] w-[20px] h-[20px] rounded-full bg-[#f6f7fb] flex items-center justify-center text-[#8359dd]"><svg class="w-[14px] h-[14px]"><use href="#phone"/></svg></span><span class="ml-[5px] w-[20px] h-[20px] rounded-full bg-[#f6f7fb] flex items-center justify-center text-[#2fc6a0]"><svg class="w-[14px] h-[14px]"><use href="#wa"/></svg></span></div><div class="flex items-center gap-[3px] text-[10.5px] leading-[15px] text-[#9098a5]"><svg class="w-[11px] h-[11px]"><use href="#mail"/></svg>samay@abc.com</div></td>
                                <td class="pl-[11px]"><span class="inline-block px-[6px] leading-[17px] rounded-[4px] bg-[#f3eefc] text-[#8359dd] text-[9px] font-medium">Car Loan</span></td>
                                <td class="pr-[10px] text-right font-medium">₹20.00 L</td>
                                <td class="pl-[11px]"><span class="inline-block px-[6px] leading-[17px] rounded-[4px] bg-[#fff5e8] text-[#fbb04c] text-[9.5px] font-medium">High</span></td>
                                <td class="pl-[11px] text-[#8f97a3]"><div class="flex items-center gap-[3px] leading-[17px]"><svg class="w-[13px] h-[13px]"><use href="#minus"/></svg>No calls yet</div><div class="flex items-center gap-[3px] leading-[17px] text-[#f0584a]"><svg class="w-[13px] h-[13px]"><use href="#bell"/></svg>17d ago</div></td>
                                <td class="pl-[11px]"><span class="w-[99px] h-[23px] rounded-[3px] bg-[#45c8a1] text-[#4c5c5a] text-[11px] flex items-center justify-center gap-[4px]"><svg class="w-[11px] h-[11px]"><use href="#check"/></svg>Converted</span></td>
                            </tr>
                            <tr class="h-[57px] border-b border-[#eff1f4]">
                                <td class="pl-[11px]"><button class="w-[70px] h-[25px] rounded-[3px] bg-[#8359dd] text-white font-medium text-[11.5px] flex items-center justify-center gap-[6px]">Actions<svg class="w-[10px] h-[10px]"><use href="#chev-b"/></svg></button></td>
                                <td class="pl-[11px] text-[#8359dd]">LD-2026-00013</td>
                                <td class="pl-[11px]"><div class="flex items-center gap-[7px]"><span class="w-[34px] h-[34px] rounded-full bg-linear-to-br from-[#ec4899] to-[#ef4444] text-white text-[13px] font-bold flex items-center justify-center">RS</span><span class="font-medium">Rahul Sharma</span></div></td>
                                <td class="pl-[11px]"><div class="flex items-center text-[10.5px]">8130179780<span class="ml-[5px] w-[20px] h-[20px] rounded-full bg-[#f6f7fb] flex items-center justify-center text-[#8359dd]"><svg class="w-[14px] h-[14px]"><use href="#phone"/></svg></span><span class="ml-[5px] w-[20px] h-[20px] rounded-full bg-[#f6f7fb] flex items-center justify-center text-[#2fc6a0]"><svg class="w-[14px] h-[14px]"><use href="#wa"/></svg></span></div><div class="flex items-center gap-[3px] text-[10.5px] leading-[15px] text-[#9098a5]"><svg class="w-[11px] h-[11px]"><use href="#mail"/></svg>centaurialpha4@gmail.com</div></td>
                                <td class="pl-[11px]"><span class="inline-block px-[6px] leading-[17px] rounded-[4px] bg-[#f3eefc] text-[#8359dd] text-[9px] font-medium">Home Loan</span></td>
                                <td class="pr-[10px] text-right font-medium">₹50.00 L</td>
                                <td class="pl-[11px]"><span class="inline-block px-[6px] leading-[17px] rounded-[4px] bg-[#e9f6fe] text-[#57b9fb] text-[9.5px] font-medium">Medium</span></td>
                                <td class="pl-[11px] text-[#8f97a3]"><div class="flex items-center gap-[3px]"><svg class="w-[13px] h-[13px]"><use href="#minus"/></svg>No calls yet</div></td>
                                <td class="pl-[11px]"><span class="w-[99px] h-[23px] rounded-[3px] bg-[#ebf6fe] text-[#6ab9fb] text-[11px] flex items-center justify-center gap-[3px]"><svg class="w-[13px] h-[13px]"><use href="#usercheck"/></svg>Assigned<svg class="w-[10px] h-[10px]"><use href="#chev"/></svg></span></td>
                            </tr>
                            <tr class="h-[58px] border-b-2 border-[#eff1f4]">
                                <td class="pl-[11px]"><button class="w-[70px] h-[25px] rounded-[3px] bg-[#8359dd] text-white font-medium text-[11.5px] flex items-center justify-center gap-[6px]">Actions<svg class="w-[10px] h-[10px]"><use href="#chev-b"/></svg></button></td>
                                <td class="pl-[11px] text-[#8359dd]">LD-2026-00012</td>
                                <td class="pl-[11px]"><div class="flex items-center gap-[7px]"><span class="w-[34px] h-[34px] rounded-full bg-linear-to-br from-[#0ea5e9] to-[#3b82f6] text-white text-[13px] font-bold flex items-center justify-center">YA</span><span class="font-medium">Yash</span></div></td>
                                <td class="pl-[11px]"><div class="flex items-center text-[10.5px]">9999987899<span class="ml-[5px] w-[20px] h-[20px] rounded-full bg-[#f6f7fb] flex items-center justify-center text-[#8359dd]"><svg class="w-[14px] h-[14px]"><use href="#phone"/></svg></span><span class="ml-[5px] w-[20px] h-[20px] rounded-full bg-[#f6f7fb] flex items-center justify-center text-[#2fc6a0]"><svg class="w-[14px] h-[14px]"><use href="#wa"/></svg></span></div></td>
                                <td class="pl-[11px]"><span class="inline-block px-[6px] leading-[17px] rounded-[4px] bg-[#f3eefc] text-[#8359dd] text-[9px] font-medium">Home Loan</span></td>
                                <td class="pr-[10px] text-right font-medium">₹10.00 L</td>
                                <td class="pl-[11px]"><span class="inline-block px-[6px] leading-[17px] rounded-[4px] bg-[#e9f6fe] text-[#57b9fb] text-[9.5px] font-medium">Medium</span></td>
                                <td class="pl-[11px] text-[#8f97a3]"><div class="flex items-center gap-[3px]"><svg class="w-[13px] h-[13px]"><use href="#minus"/></svg>No calls yet</div></td>
                                <td class="pl-[11px]"><span class="w-[99px] h-[23px] rounded-[3px] bg-[#ebf6fe] text-[#6ab9fb] text-[11px] flex items-center justify-center gap-[3px]"><svg class="w-[13px] h-[13px]"><use href="#usercheck"/></svg>Assigned<svg class="w-[10px] h-[10px]"><use href="#chev"/></svg></span></td>
                            </tr>
                        </tbody>
                    </table>
                    <div class="h-[57px] flex items-center pl-[18px] pr-[18px]">
                        <p class="text-[10.3px] text-[#8f97a3]">Showing 1 to 10 of 71 entries</p>
                        <div class="ml-auto flex h-[28px] text-[12.5px] text-[#3a4456] rounded-[4px] border border-[#f0f1f4]">
                            <span class="w-[66px] flex items-center justify-center text-[#8a8f98]">Previous</span>
                            <span class="w-[21px] flex items-center justify-center bg-[#8359dd] text-white">1</span>
                            <span class="w-[24px] flex items-center justify-center border-r border-[#f0f1f4]">2</span>
                            <span class="w-[23px] flex items-center justify-center border-r border-[#f0f1f4]">3</span>
                            <span class="w-[24px] flex items-center justify-center border-r border-[#f0f1f4]">4</span>
                            <span class="w-[23px] flex items-center justify-center border-r border-[#f0f1f4]">5</span>
                            <span class="w-[42px] flex items-center justify-center">Next</span>
                        </div>
                    </div>
                </div>
            </main>

            <!-- Footer -->
            <footer class="h-[47px] shrink-0 bg-white flex items-center justify-center text-[11.8px] text-[#8a919e] pt-[3px]">
                <p>Copyright © 2026 <span class="text-[#111] font-medium">SigmaDSA</span>. Designed with
                    <svg class="inline-block align-[-1px] w-[12px] h-[12px] text-[#e8503a]" viewBox="0 0 24 24" fill="currentColor"><path d="M12 23C5 15 1 11 1 7a6 6 0 0 1 11-3 6 6 0 0 1 11 3c0 4-4 8-11 16z"/></svg>
                    by <a class="text-[#8359dd] font-medium underline">Argentron Technologies</a> All rights reserved</p>
            </footer>
        </div>
    </div>

    <!-- Tour highlight over the customize button -->
    <div class="absolute left-[1843px] top-[132px] w-[36px] h-[36px] rounded-[10px] border-[3px] border-[#f59e0b] bg-white shadow-[0_0_0_4px_rgba(245,158,11,.15)] flex items-center justify-center">
        <span class="w-[25px] h-[25px] rounded-[4px] bg-[#f3f4f6] flex items-center justify-center text-[#6b7688]">
            <svg class="w-[13px] h-[13px]" viewBox="0 0 24 24" fill="none" stroke="currentColor" stroke-width="1.6"><path d="M2 5h20M2 12h20M2 19h20"/><path d="M15 2v6M9 9v6M15 16v6" stroke="#a8643c" stroke-width="2"/></svg>
        </span>
    </div>
    <div class="absolute left-[1852px] top-[168px] w-[18px] flex flex-col items-center">
        <span class="w-0 h-0 border-x-[9px] border-x-transparent border-b-[17px] border-b-[#f59e0b]"></span>
        <span class="w-[3px] h-[20px] bg-[#f59e0b]"></span>
    </div>
    <div class="absolute left-[1717px] top-[208px] w-[203px] h-[67px] rounded-[8px] bg-[#141b2d] shadow-[0_8px_24px_rgba(20,27,45,.35)] pl-[12px] pt-[9px] text-[11.4px] leading-[16.5px] font-medium text-white">
        Click the gear icon to open<br>Customize Tabs — pick which<br>tabs and columns appear
    </div>

    <!-- Floating AI button -->
    <button class="absolute left-[1848px] top-[1008px] w-[50px] h-[50px] rounded-[16px] bg-linear-to-br from-[#6366f1] to-[#9160ee] shadow-[0_0_0_5px_rgba(100,100,240,.16),0_6px_20px_rgba(100,100,240,.25)] flex items-center justify-center">
        <svg class="w-[24px] h-[24px]" viewBox="0 0 24 24" fill="#fff"><path d="M13 7.5Q14.5 13.5 20.500 15Q14.500 16.500 13 22.500Q11.500 16.500 5.500 15Q11.500 13.500 13 7.500z"/><path d="M7.500 2.500Q8.500 6.500 12.500 7.500Q8.500 8.500 7.500 12.500Q6.500 8.500 2.500 7.500Q6.500 6.500 7.500 2.500z"/><path d="M17 1Q17.600 3.400 20 4Q17.600 4.600 17 7Q16.400 4.600 14 4Q16.400 3.400 17 1z"/></svg>
    </button>
</body>
</html>
